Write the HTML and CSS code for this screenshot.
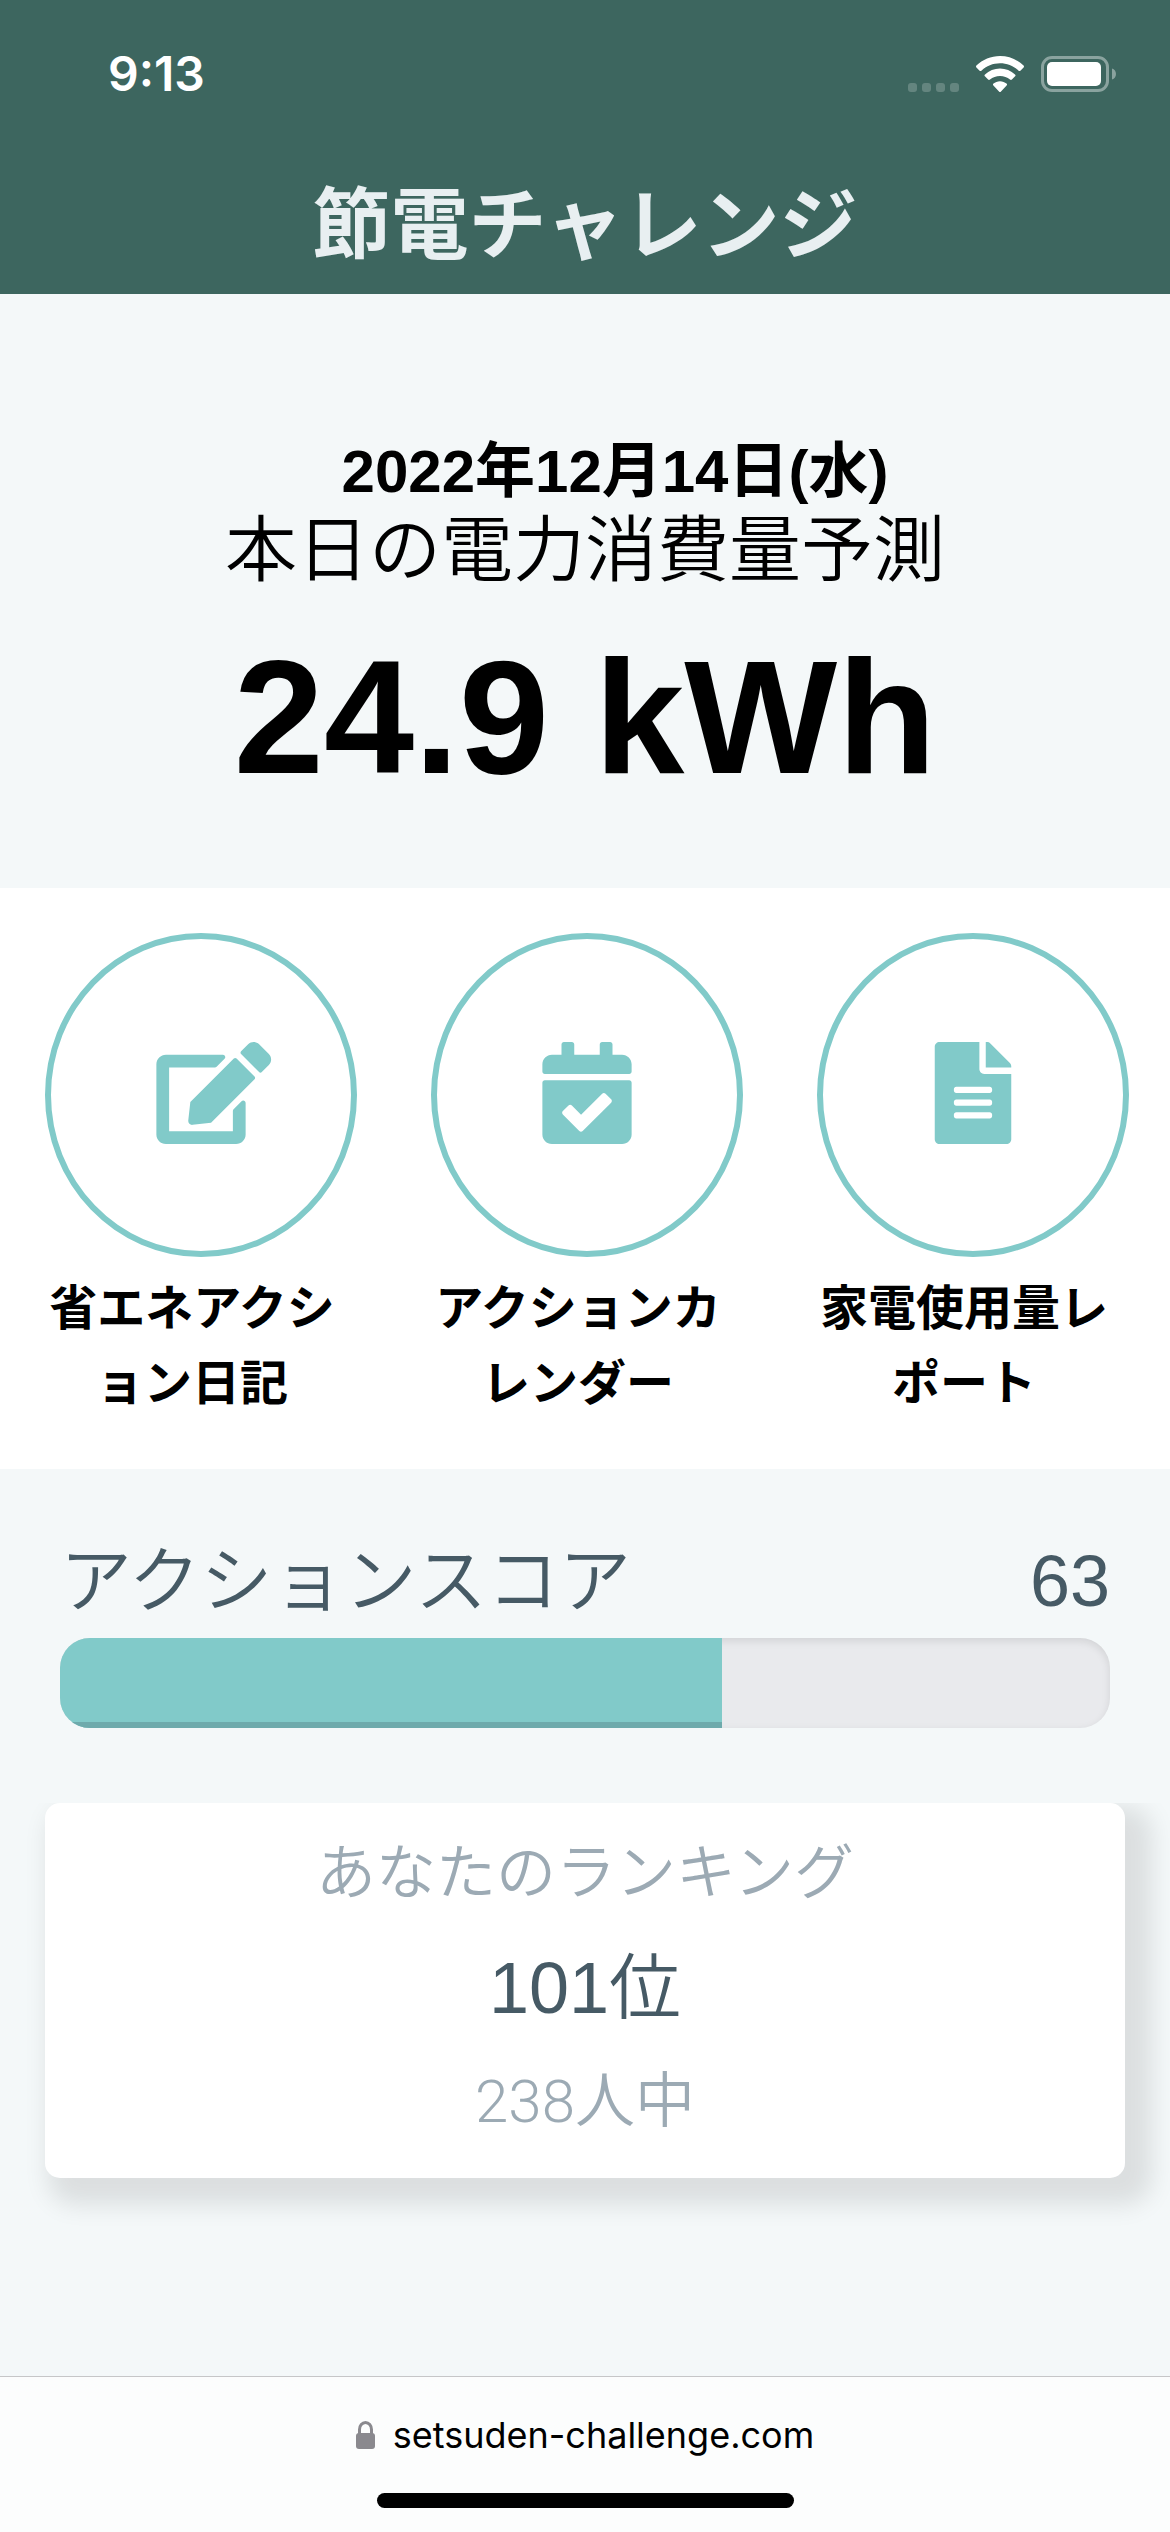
FILE: index.html
```html
<!DOCTYPE html>
<html lang="ja">
<head>
<meta charset="utf-8">
<meta name="viewport" content="width=device-width, initial-scale=1">
<title>節電チャレンジ</title>
<link rel="stylesheet" href="styles.css">
</head>
<body>
<header class="header">
  <div class="status">
    <time class="status-time">9:13</time>
    <div class="status-icons">
      <svg class="icon-signal" viewBox="0 0 51 9" aria-hidden="true"><rect width="9" height="9" rx="3"/><rect x="14" width="9" height="9" rx="3"/><rect x="28" width="9" height="9" rx="3"/><rect x="42" width="9" height="9" rx="3"/></svg>
      <svg class="icon-wifi" viewBox="0 0 48 36" aria-hidden="true"><path d="M24 0C33 0 41.500 3.600 47.600 9.600Q48.400 10.500 47.600 11.400L44.400 14.700Q43.500 15.500 42.600 14.700C37.600 10 31 7.300 24 7.300S10.400 10 5.400 14.700Q4.500 15.500 3.600 14.700L.4 11.400Q-.4 10.500.4 9.600C6.500 3.600 15 0 24 0ZM24 12.600C29.700 12.600 35 14.800 39 18.500Q40 19.400 39.100 20.300L35.900 23.500Q35 24.400 34 23.500C31.300 21.200 27.800 19.900 24 19.900S16.700 21.200 14 23.500Q13 24.400 12.100 23.500L8.900 20.300Q8 19.400 9 18.500C13 14.800 18.300 12.600 24 12.600ZM24 25.200C26.500 25.200 28.800 26.100 30.500 27.600Q31.500 28.500 30.600 29.400L25 35.400Q24 36.400 23 35.400L17.400 29.400Q16.500 28.500 17.500 27.600C19.200 26.100 21.500 25.200 24 25.200Z"/></svg>
      <svg class="icon-battery" viewBox="0 0 75 36" aria-hidden="true"><rect class="shell" x="1.500" y="1.500" width="65" height="33" rx="9.500"/><rect x="6" y="6" width="54" height="24" rx="5"/><path class="nub" d="M71 12.500C73.500 13.300 75 15.500 75 18S73.500 22.700 71 23.500Z"/></svg>
    </div>
  </div>
  <h1 class="title">節電チャレンジ</h1>
</header>

<main class="main">
  <section class="forecast">
    <p class="date">2022年12月14日(水)</p>
    <h2 class="forecast-label">本日の電力消費量予測</h2>
    <p class="forecast-value">24.9 kWh</p>
  </section>

  <nav class="menu">
    <a class="menu-item" href="#diary">
      <span class="circle"><svg class="menu-icon" viewBox="0 0 448 512" aria-hidden="true"><path d="M402.600 83.200l90.200 90.200c3.800 3.800 3.800 10 0 13.800L274.400 405.600l-92.800 10.300c-12.400 1.400-22.900-9.100-21.500-21.500l10.300-92.800L388.800 83.200c3.800-3.800 10-3.800 13.800 0zm162-22.900l-48.800-48.800c-15.200-15.200-39.900-15.200-55.200 0l-35.400 35.400c-3.800 3.800-3.800 10 0 13.800l90.200 90.200c3.800 3.800 10 3.800 13.800 0l35.400-35.400c15.200-15.300 15.200-40 0-55.200zM384 346.200V448H64V128h229.800c3.200 0 6.200-1.300 8.500-3.500l40-40c7.600-7.600 2.200-20.500-8.500-20.500H48C21.500 64 0 85.500 0 112v352c0 26.500 21.500 48 48 48h352c26.500 0 48-21.500 48-48V306.200c0-10.700-12.900-16-20.500-8.500l-40 40c-2.200 2.300-3.500 5.300-3.500 8.500z"/></svg></span>
      <span class="menu-label">省エネアクション日記</span>
    </a>
    <a class="menu-item" href="#calendar">
      <span class="circle"><svg class="menu-icon" viewBox="0 0 448 512" aria-hidden="true"><path d="M436 160H12c-6.627 0-12-5.373-12-12v-36c0-26.510 21.490-48 48-48h48V12c0-6.627 5.373-12 12-12h40c6.627 0 12 5.373 12 12v52h128V12c0-6.627 5.373-12 12-12h40c6.627 0 12 5.373 12 12v52h48c26.510 0 48 21.490 48 48v36c0 6.627-5.373 12-12 12zM12 192h424c6.627 0 12 5.373 12 12v260c0 26.510-21.490 48-48 48H48c-26.510 0-48-21.490-48-48V204c0-6.627 5.373-12 12-12zm333.296 95.947l-28.169-28.398c-4.667-4.705-12.265-4.736-16.970-.068L194.120 364.665l-45.980-46.352c-4.667-4.705-12.266-4.736-16.971-.068l-28.397 28.170c-4.705 4.667-4.736 12.265-.068 16.970l82.601 83.269c4.667 4.705 12.265 4.736 16.970.068l142.953-141.805c4.705-4.667 4.736-12.265.068-16.970z"/></svg></span>
      <span class="menu-label">アクションカレンダー</span>
    </a>
    <a class="menu-item" href="#report">
      <span class="circle"><svg class="menu-icon" viewBox="-32 0 448 512" aria-hidden="true"><path d="M224 136V0H24C10.700 0 0 10.700 0 24v464c0 13.300 10.700 24 24 24h336c13.300 0 24-10.700 24-24V160H248c-13.200 0-24-10.800-24-24zm64 236c0 6.600-5.400 12-12 12H108c-6.600 0-12-5.400-12-12v-8c0-6.600 5.400-12 12-12h168c6.600 0 12 5.400 12 12v8zm0-64c0 6.600-5.400 12-12 12H108c-6.600 0-12-5.400-12-12v-8c0-6.600 5.400-12 12-12h168c6.600 0 12 5.400 12 12v8zm0-72v8c0 6.600-5.400 12-12 12H108c-6.600 0-12-5.400-12-12v-8c0-6.600 5.400-12 12-12h168c6.600 0 12 5.400 12 12zm96-114.100v6.100H256V0h6.100c6.400 0 12.500 2.500 17 7l97.900 98c4.500 4.500 7 10.600 7 16.900z"/></svg></span>
      <span class="menu-label">家電使用量レポート</span>
    </a>
  </nav>

  <section class="score">
    <div class="score-head">
      <h2 class="score-label" id="score-label">アクションスコア</h2>
      <span class="score-value">63</span>
    </div>
    <div class="bar" role="progressbar" aria-labelledby="score-label" aria-valuemin="0" aria-valuemax="100" aria-valuenow="63">
      <div class="bar-fill" style="width: 63%"></div>
    </div>
  </section>

  <section class="ranking">
    <div class="card">
      <h2 class="card-note">あなたのランキング</h2>
      <p class="card-rank">101位</p>
      <p class="card-note">238人中</p>
    </div>
  </section>
</main>

<footer class="browser-bar">
  <a class="address" href="#top">
    <svg class="icon-lock" viewBox="0 0 19 28" aria-hidden="true"><rect y="12" width="19" height="16" rx="3"/><path d="M3.500 13V8.500a6 7 0 0 1 12 0V13"/></svg>
    <span>setsuden-challenge.com</span>
  </a>
  <div class="home-indicator"></div>
</footer>
</body>
</html>
```

FILE: styles.css
```css
* {
  box-sizing: border-box;
}

body {
  margin: 0;
  min-height: 100vh;
  display: flex;
  flex-direction: column;
  background: #f4f8f9;
  color: #000;
  font-family: "Liberation Sans", "Noto Sans CJK JP", sans-serif;
}

h1,
h2,
p {
  margin: 0;
  font-weight: 400;
}

/* Header */

.header {
  padding: 44px 0 19px;
  background: #3d665f;
  color: #e8eff1;
}

.status {
  display: flex;
  justify-content: space-between;
  align-items: center;
  height: 60px;
  padding: 0 54px 0 108px;
  color: #fff;
}

.status-time {
  font: 600 48px/60px Inter, sans-serif;
}

.status-icons {
  display: flex;
  align-items: flex-end;
  gap: 17px;
  fill: #fff;
}

.icon-signal {
  width: 51px;
  height: 9px;
  opacity: 0.2;
}

.icon-wifi {
  width: 48px;
  height: 36px;
}

.icon-battery {
  width: 75px;
  height: 36px;
}

.shell {
  fill: none;
  stroke: #fff;
  stroke-width: 3;
  opacity: 0.4;
}

.nub {
  opacity: 0.4;
}

.title {
  margin-top: 73px;
  font-size: 78px;
  font-weight: 700;
  line-height: 98px;
  text-align: center;
}

/* Forecast */

.main {
  flex: 1;
}

.forecast {
  padding: 142px 0 76px;
  text-align: center;
}

.date {
  padding-left: 60px;
  font-size: 60px;
  font-weight: 700;
  line-height: 72px;
}

.forecast-label {
  font-size: 72px;
  font-weight: 350;
  line-height: 84px;
}

.forecast-value {
  margin-top: 30px;
  font-size: 162px;
  font-weight: 700;
  line-height: 190px;
}

/* Menu */

.menu {
  display: grid;
  grid-template-columns: repeat(3, 1fr);
  gap: 74px;
  padding: 45px 41px 48px 45px;
  background: #fff;
}

.menu-item {
  color: inherit;
  text-decoration: none;
}

.circle {
  display: flex;
  align-items: center;
  justify-content: center;
  height: 324px;
  padding-bottom: 4px;
  border: 6px solid #81cac9;
  border-radius: 50%;
}

.menu-icon {
  width: 90px;
  height: 102px;
  overflow: visible;
  fill: #81cac9;
}

.menu-label {
  display: block;
  margin-top: 14px;
  padding-right: 18px;
  font-size: 48px;
  font-weight: 700;
  line-height: 75px;
  text-align: center;
  line-break: anywhere;
}

/* Score */

.score {
  padding: 67px 60px 0;
  color: #465a65;
}

.score-head {
  display: flex;
  justify-content: space-between;
  align-items: baseline;
  font-size: 72px;
  line-height: 90px;
}

.score-label {
  font-size: 72px;
  font-weight: 350;
}

.bar {
  height: 90px;
  margin-top: 12px;
  overflow: hidden;
  border-radius: 30px;
  background: #e9eaed;
  box-shadow: inset 0 3px 9px rgba(0, 0, 0, 0.1);
}

.bar-fill {
  height: 100%;
  background: #81cac9;
  box-shadow: inset 0 -6px 0 #6eaaac;
}

/* Ranking */

.ranking {
  margin-top: 75px;
  padding: 0 45px 75px;
  overflow: hidden;
}

.card {
  display: grid;
  gap: 27px;
  padding: 29px 0 34px;
  border-radius: 15px;
  background: #fff;
  box-shadow: 15px 15px 24px 12px rgba(0, 0, 0, 0.1);
  text-align: center;
}

.card-note {
  color: #9caab4;
  font-family: Roboto, "Noto Sans CJK JP", sans-serif;
  font-size: 60px;
  font-weight: 350;
  line-height: 84px;
}

.card-rank {
  color: #465a65;
  font-size: 72px;
  font-weight: 350;
  line-height: 90px;
}

/* Browser bar */

.browser-bar {
  display: flex;
  flex-direction: column;
  align-items: center;
  gap: 34px;
  padding: 34px 0 24px;
  border-top: 1px solid #c6c6c8;
  background: #fcfdfd;
}

.address {
  display: flex;
  align-items: center;
  gap: 18px;
  color: #000;
  font: 400 36px/48px Inter, sans-serif;
  text-decoration: none;
}

.icon-lock {
  width: 19px;
  height: 28px;
  fill: #8a898e;
}

.icon-lock path {
  fill: none;
  stroke: #8a898e;
  stroke-width: 3;
}

.home-indicator {
  width: 417px;
  height: 15px;
  border-radius: 8px;
  background: #000;
}
```
